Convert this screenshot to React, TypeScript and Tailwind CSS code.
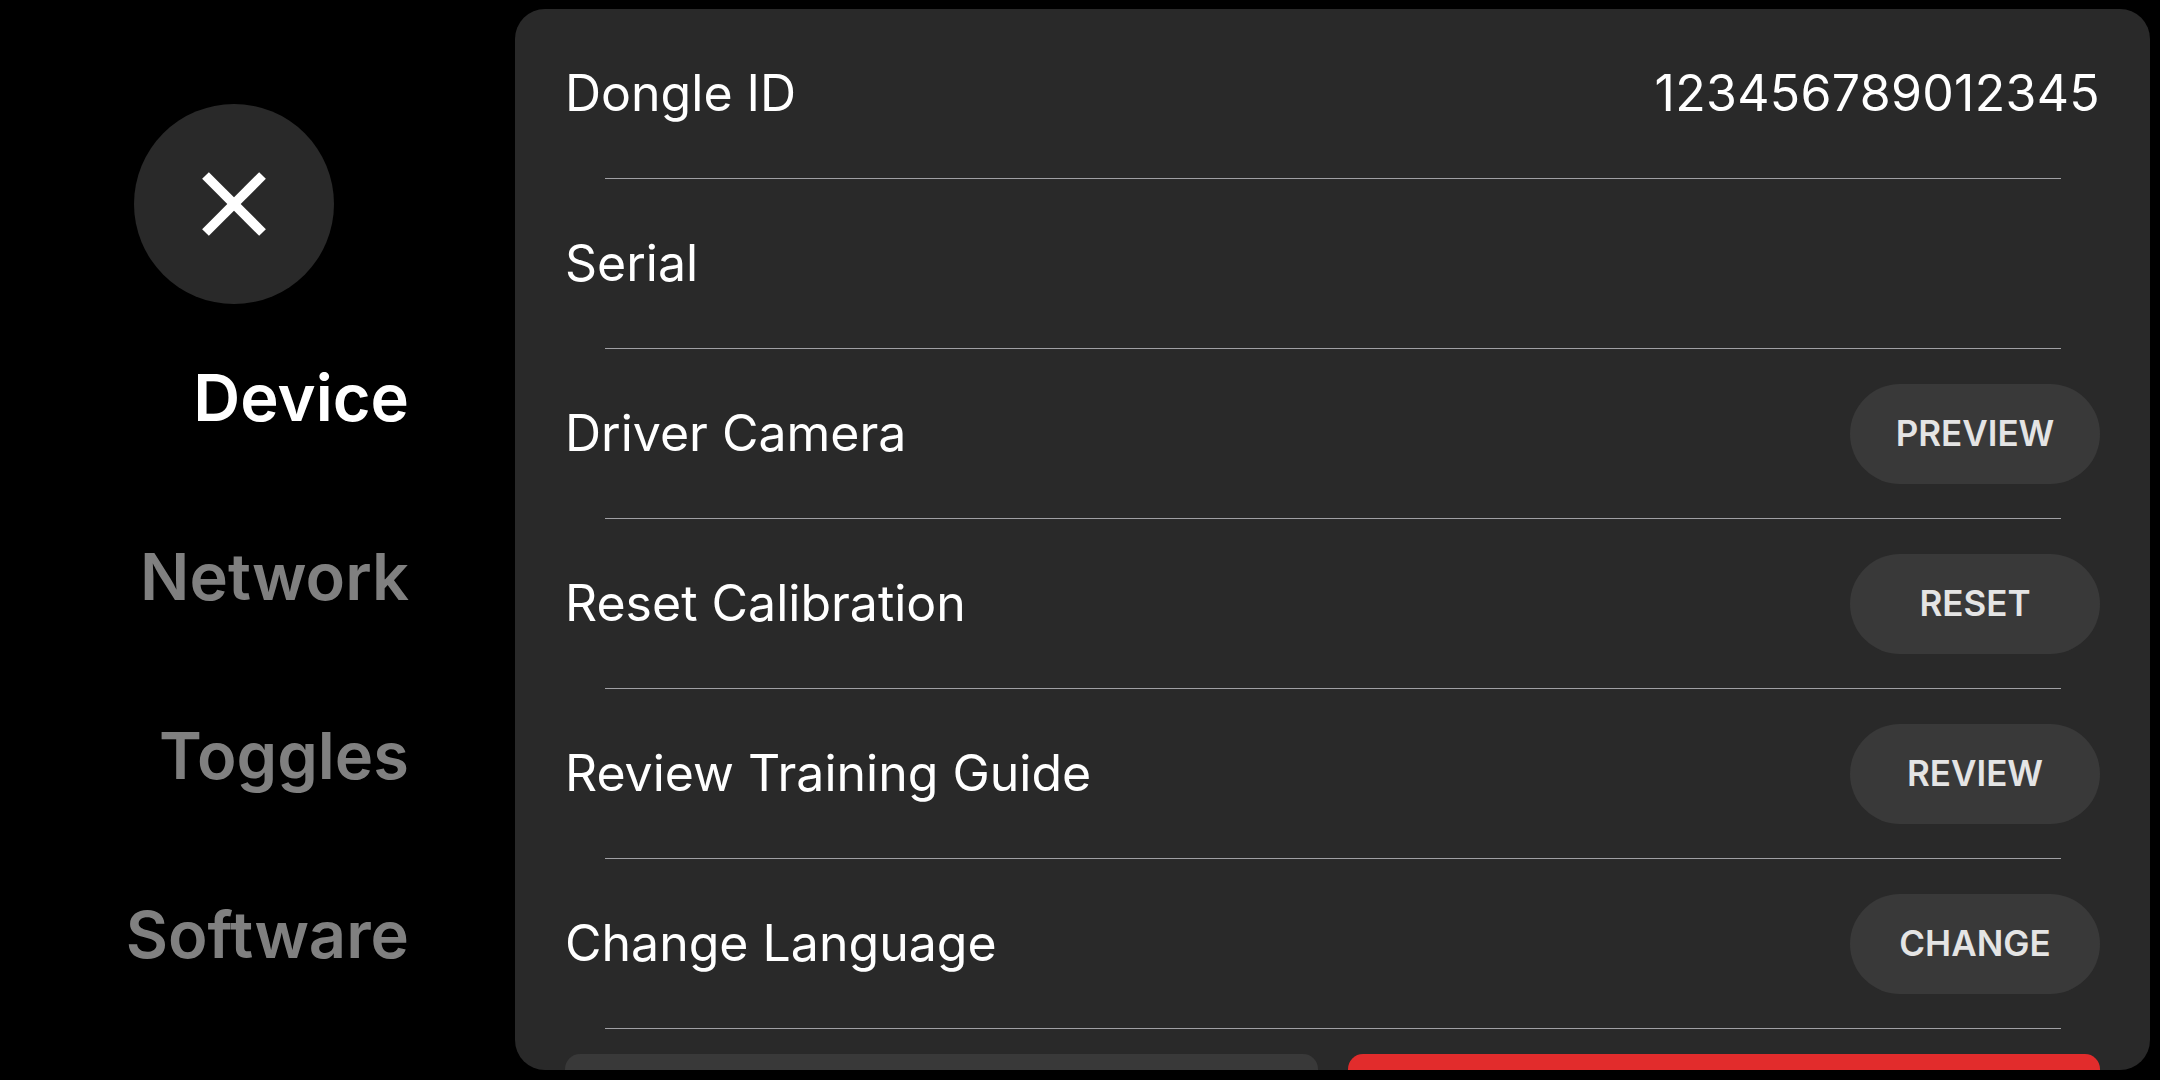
import React from 'react';

const rows = [
  { label: 'Dongle ID', value: '123456789012345' },
  { label: 'Serial', value: '' },
  { label: 'Driver Camera', button: 'PREVIEW' },
  { label: 'Reset Calibration', button: 'RESET' },
  { label: 'Review Training Guide', button: 'REVIEW' },
  { label: 'Change Language', button: 'CHANGE' },
];

const navItems = ['Device', 'Network', 'Toggles', 'Software'];

const App = () => {
  return (
    <div className="flex h-[1080px] w-[2160px] overflow-hidden bg-black font-['Inter',sans-serif]">
      {/* Sidebar */}
      <div className="flex w-[500px] shrink-0 flex-col">
        <button className="ml-[134px] mt-[104px] flex h-[200px] w-[200px] items-center justify-center rounded-full bg-[#292929]">
          <svg width="64" height="64" viewBox="0 0 64 64">
            <line x1="3.5" y1="3.5" x2="60.5" y2="60.5" stroke="white" strokeWidth="9.5" />
            <line x1="60.5" y1="3.5" x2="3.5" y2="60.5" stroke="white" strokeWidth="9.5" />
          </svg>
        </button>
        <nav className="mt-[4px] flex flex-col pr-[91px]">
          {navItems.map((item, i) => (
            <div
              key={item}
              className={
                i === 0
                  ? 'flex h-[179px] items-center justify-end text-[65px] font-semibold text-white'
                  : 'flex h-[179px] items-center justify-end text-[65px] font-semibold text-[#808080]'
              }
            >
              {item}
            </div>
          ))}
        </nav>
      </div>

      {/* Panel */}
      <div className="ml-[15px] mt-[9px] h-[1061px] w-[1635px] shrink-0 overflow-hidden rounded-[30px] bg-[#292929] px-[50px]">
        {rows.map((row) => (
          <div key={row.label}>
            <div className="flex h-[169px] items-center justify-between text-[50px] font-normal text-white">
              <span>{row.label}</span>
              {row.value !== undefined && <span className="tracking-[0.3px]">{row.value}</span>}
              {row.button && (
                <button className="flex h-[100px] w-[250px] items-center justify-center rounded-[50px] bg-[#393939] text-[35px] font-semibold text-[#E4E4E4]">
                  {row.button}
                </button>
              )}
            </div>
            <div className="ml-[40px] mr-[39px] h-px bg-[#a0a0a4]" />
          </div>
        ))}

        {/* Reboot / Power off (below the fold) */}
        <div className="mt-[25px] grid grid-cols-2 gap-[30px]">
          <button aria-label="Reboot" className="h-[120px] rounded-[15px] bg-[#393939]" />
          <button aria-label="Power Off" className="h-[120px] rounded-[15px] bg-[#E22C2C]" />
        </div>
      </div>
    </div>
  );
};

export default App;
